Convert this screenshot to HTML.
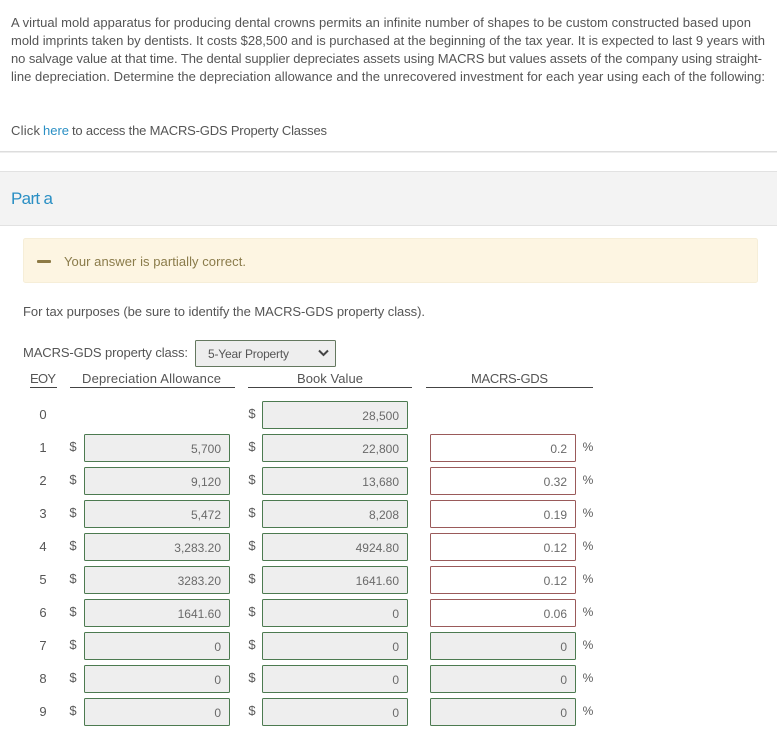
<!DOCTYPE html>
<html><head><meta charset="utf-8"><style>
html,body{margin:0;padding:0;background:#fff;width:777px;height:741px;overflow:hidden}
svg{display:block}
text{font-family:"Liberation Sans",sans-serif;fill:#555;font-size:13px}
.v{font-size:12px;text-anchor:end;fill:#6a6a6a}
.l{text-anchor:middle;fill:#555}
.g{fill:#eee;stroke:#4c7a50;stroke-width:1}
.r{fill:#fff;stroke:#9a5a5a;stroke-width:1}
.s{font-size:13px;fill:#5a5a5a;text-anchor:middle}
.p{font-size:12px;fill:#5a5a5a;text-anchor:middle}
</style></head><body>
<svg width="777" height="741" viewBox="0 0 777 741" xmlns="http://www.w3.org/2000/svg">
<text x="11" y="27" textLength="740">A virtual mold apparatus for producing dental crowns permits an infinite number of shapes to be custom constructed based upon</text>
<text x="11" y="45" textLength="754">mold imprints taken by dentists. It costs $28,500 and is purchased at the beginning of the tax year. It is expected to last 9 years with</text>
<text x="11" y="63" textLength="751">no salvage value at that time. The dental supplier depreciates assets using MACRS but values assets of the company using straight-</text>
<text x="11" y="81" textLength="754">line depreciation. Determine the depreciation allowance and the unrecovered investment for each year using each of the following:</text>
<text x="11" y="135" textLength="29">Click</text>
<text x="43" y="135" textLength="26" style="fill:#2a8fc4">here</text>
<text x="72" y="135" textLength="255">to access the MACRS-GDS Property Classes</text>
<rect x="0" y="151" width="777" height="1.5" fill="#ddd"/>
<rect x="0" y="171" width="777" height="54" fill="#f3f3f3"/>
<rect x="0" y="171" width="777" height="1" fill="#e2e2e2"/>
<rect x="0" y="225" width="777" height="1" fill="#e2e2e2"/>
<text x="11" y="204" textLength="42" style="font-size:17px;fill:#2a8fc4">Part a</text>
<rect x="23.5" y="238.5" width="734" height="44" rx="2" fill="#fdf5e2" stroke="#f6eed8"/>
<rect x="37" y="260" width="14" height="3" rx="1" fill="#8d7a45"/>
<text x="64" y="266" textLength="182" style="fill:#8a7b4a">Your answer is partially correct.</text>
<text x="23" y="316" textLength="402">For tax purposes (be sure to identify the MACRS-GDS property class).</text>
<text x="23" y="357" textLength="165">MACRS-GDS property class:</text>
<rect x="195.500" y="340.500" width="140" height="26" rx="1" fill="#eee" stroke="#64785f"/>
<text x="208" y="358" textLength="81" style="font-size:12px">5-Year Property</text>
<path d="M319 350.500l4.500 4.500 4.500-4.500" fill="none" stroke="#444" stroke-width="2"/>
<text x="30" y="383" textLength="26">EOY</text>
<text x="82" y="383" textLength="139">Depreciation Allowance</text>
<text x="297" y="383" textLength="66">Book Value</text>
<text x="471" y="383" textLength="77">MACRS-GDS</text>
<g fill="#444">
<rect x="30" y="387" width="27" height="1"/>
<rect x="70" y="387" width="165" height="1"/>
<rect x="248" y="387" width="164" height="1"/>
<rect x="426" y="387" width="167" height="1"/>
</g>

<text class="l" x="43" y="419">0</text>
<text class="s" x="252" y="418">$</text>
<rect class="g" x="262.500" y="401.500" width="145" height="27" rx="1"/>
<text class="v" x="399" y="420">28,500</text>

<text class="l" x="43" y="452">1</text>
<text class="s" x="73" y="451">$</text>
<rect class="g" x="84.500" y="434.500" width="145" height="27" rx="1"/>
<text class="v" x="221" y="453">5,700</text>
<text class="s" x="252" y="451">$</text>
<rect class="g" x="262.500" y="434.500" width="145" height="27" rx="1"/>
<text class="v" x="399" y="453">22,800</text>
<rect class="r" x="430.500" y="434.500" width="145" height="27" rx="1"/>
<text class="v" x="567" y="453">0.2</text>
<text class="p" x="588" y="451">%</text>

<text class="l" x="43" y="485">2</text>
<text class="s" x="73" y="484">$</text>
<rect class="g" x="84.500" y="467.500" width="145" height="27" rx="1"/>
<text class="v" x="221" y="486">9,120</text>
<text class="s" x="252" y="484">$</text>
<rect class="g" x="262.500" y="467.500" width="145" height="27" rx="1"/>
<text class="v" x="399" y="486">13,680</text>
<rect class="r" x="430.500" y="467.500" width="145" height="27" rx="1"/>
<text class="v" x="567" y="486">0.32</text>
<text class="p" x="588" y="484">%</text>

<text class="l" x="43" y="518">3</text>
<text class="s" x="73" y="517">$</text>
<rect class="g" x="84.500" y="500.500" width="145" height="27" rx="1"/>
<text class="v" x="221" y="519">5,472</text>
<text class="s" x="252" y="517">$</text>
<rect class="g" x="262.500" y="500.500" width="145" height="27" rx="1"/>
<text class="v" x="399" y="519">8,208</text>
<rect class="r" x="430.500" y="500.500" width="145" height="27" rx="1"/>
<text class="v" x="567" y="519">0.19</text>
<text class="p" x="588" y="517">%</text>

<text class="l" x="43" y="551">4</text>
<text class="s" x="73" y="550">$</text>
<rect class="g" x="84.500" y="533.500" width="145" height="27" rx="1"/>
<text class="v" x="221" y="552">3,283.20</text>
<text class="s" x="252" y="550">$</text>
<rect class="g" x="262.500" y="533.500" width="145" height="27" rx="1"/>
<text class="v" x="399" y="552">4924.80</text>
<rect class="r" x="430.500" y="533.500" width="145" height="27" rx="1"/>
<text class="v" x="567" y="552">0.12</text>
<text class="p" x="588" y="550">%</text>

<text class="l" x="43" y="584">5</text>
<text class="s" x="73" y="583">$</text>
<rect class="g" x="84.500" y="566.500" width="145" height="27" rx="1"/>
<text class="v" x="221" y="585">3283.20</text>
<text class="s" x="252" y="583">$</text>
<rect class="g" x="262.500" y="566.500" width="145" height="27" rx="1"/>
<text class="v" x="399" y="585">1641.60</text>
<rect class="r" x="430.500" y="566.500" width="145" height="27" rx="1"/>
<text class="v" x="567" y="585">0.12</text>
<text class="p" x="588" y="583">%</text>

<text class="l" x="43" y="617">6</text>
<text class="s" x="73" y="616">$</text>
<rect class="g" x="84.500" y="599.500" width="145" height="27" rx="1"/>
<text class="v" x="221" y="618">1641.60</text>
<text class="s" x="252" y="616">$</text>
<rect class="g" x="262.500" y="599.500" width="145" height="27" rx="1"/>
<text class="v" x="399" y="618">0</text>
<rect class="r" x="430.500" y="599.500" width="145" height="27" rx="1"/>
<text class="v" x="567" y="618">0.06</text>
<text class="p" x="588" y="616">%</text>

<text class="l" x="43" y="650">7</text>
<text class="s" x="73" y="649">$</text>
<rect class="g" x="84.500" y="632.500" width="145" height="27" rx="1"/>
<text class="v" x="221" y="651">0</text>
<text class="s" x="252" y="649">$</text>
<rect class="g" x="262.500" y="632.500" width="145" height="27" rx="1"/>
<text class="v" x="399" y="651">0</text>
<rect class="g" x="430.500" y="632.500" width="145" height="27" rx="1"/>
<text class="v" x="567" y="651">0</text>
<text class="p" x="588" y="649">%</text>

<text class="l" x="43" y="683">8</text>
<text class="s" x="73" y="682">$</text>
<rect class="g" x="84.500" y="665.500" width="145" height="27" rx="1"/>
<text class="v" x="221" y="684">0</text>
<text class="s" x="252" y="682">$</text>
<rect class="g" x="262.500" y="665.500" width="145" height="27" rx="1"/>
<text class="v" x="399" y="684">0</text>
<rect class="g" x="430.500" y="665.500" width="145" height="27" rx="1"/>
<text class="v" x="567" y="684">0</text>
<text class="p" x="588" y="682">%</text>

<text class="l" x="43" y="716">9</text>
<text class="s" x="73" y="715">$</text>
<rect class="g" x="84.500" y="698.500" width="145" height="27" rx="1"/>
<text class="v" x="221" y="717">0</text>
<text class="s" x="252" y="715">$</text>
<rect class="g" x="262.500" y="698.500" width="145" height="27" rx="1"/>
<text class="v" x="399" y="717">0</text>
<rect class="g" x="430.500" y="698.500" width="145" height="27" rx="1"/>
<text class="v" x="567" y="717">0</text>
<text class="p" x="588" y="715">%</text>
</svg>
</body></html>
